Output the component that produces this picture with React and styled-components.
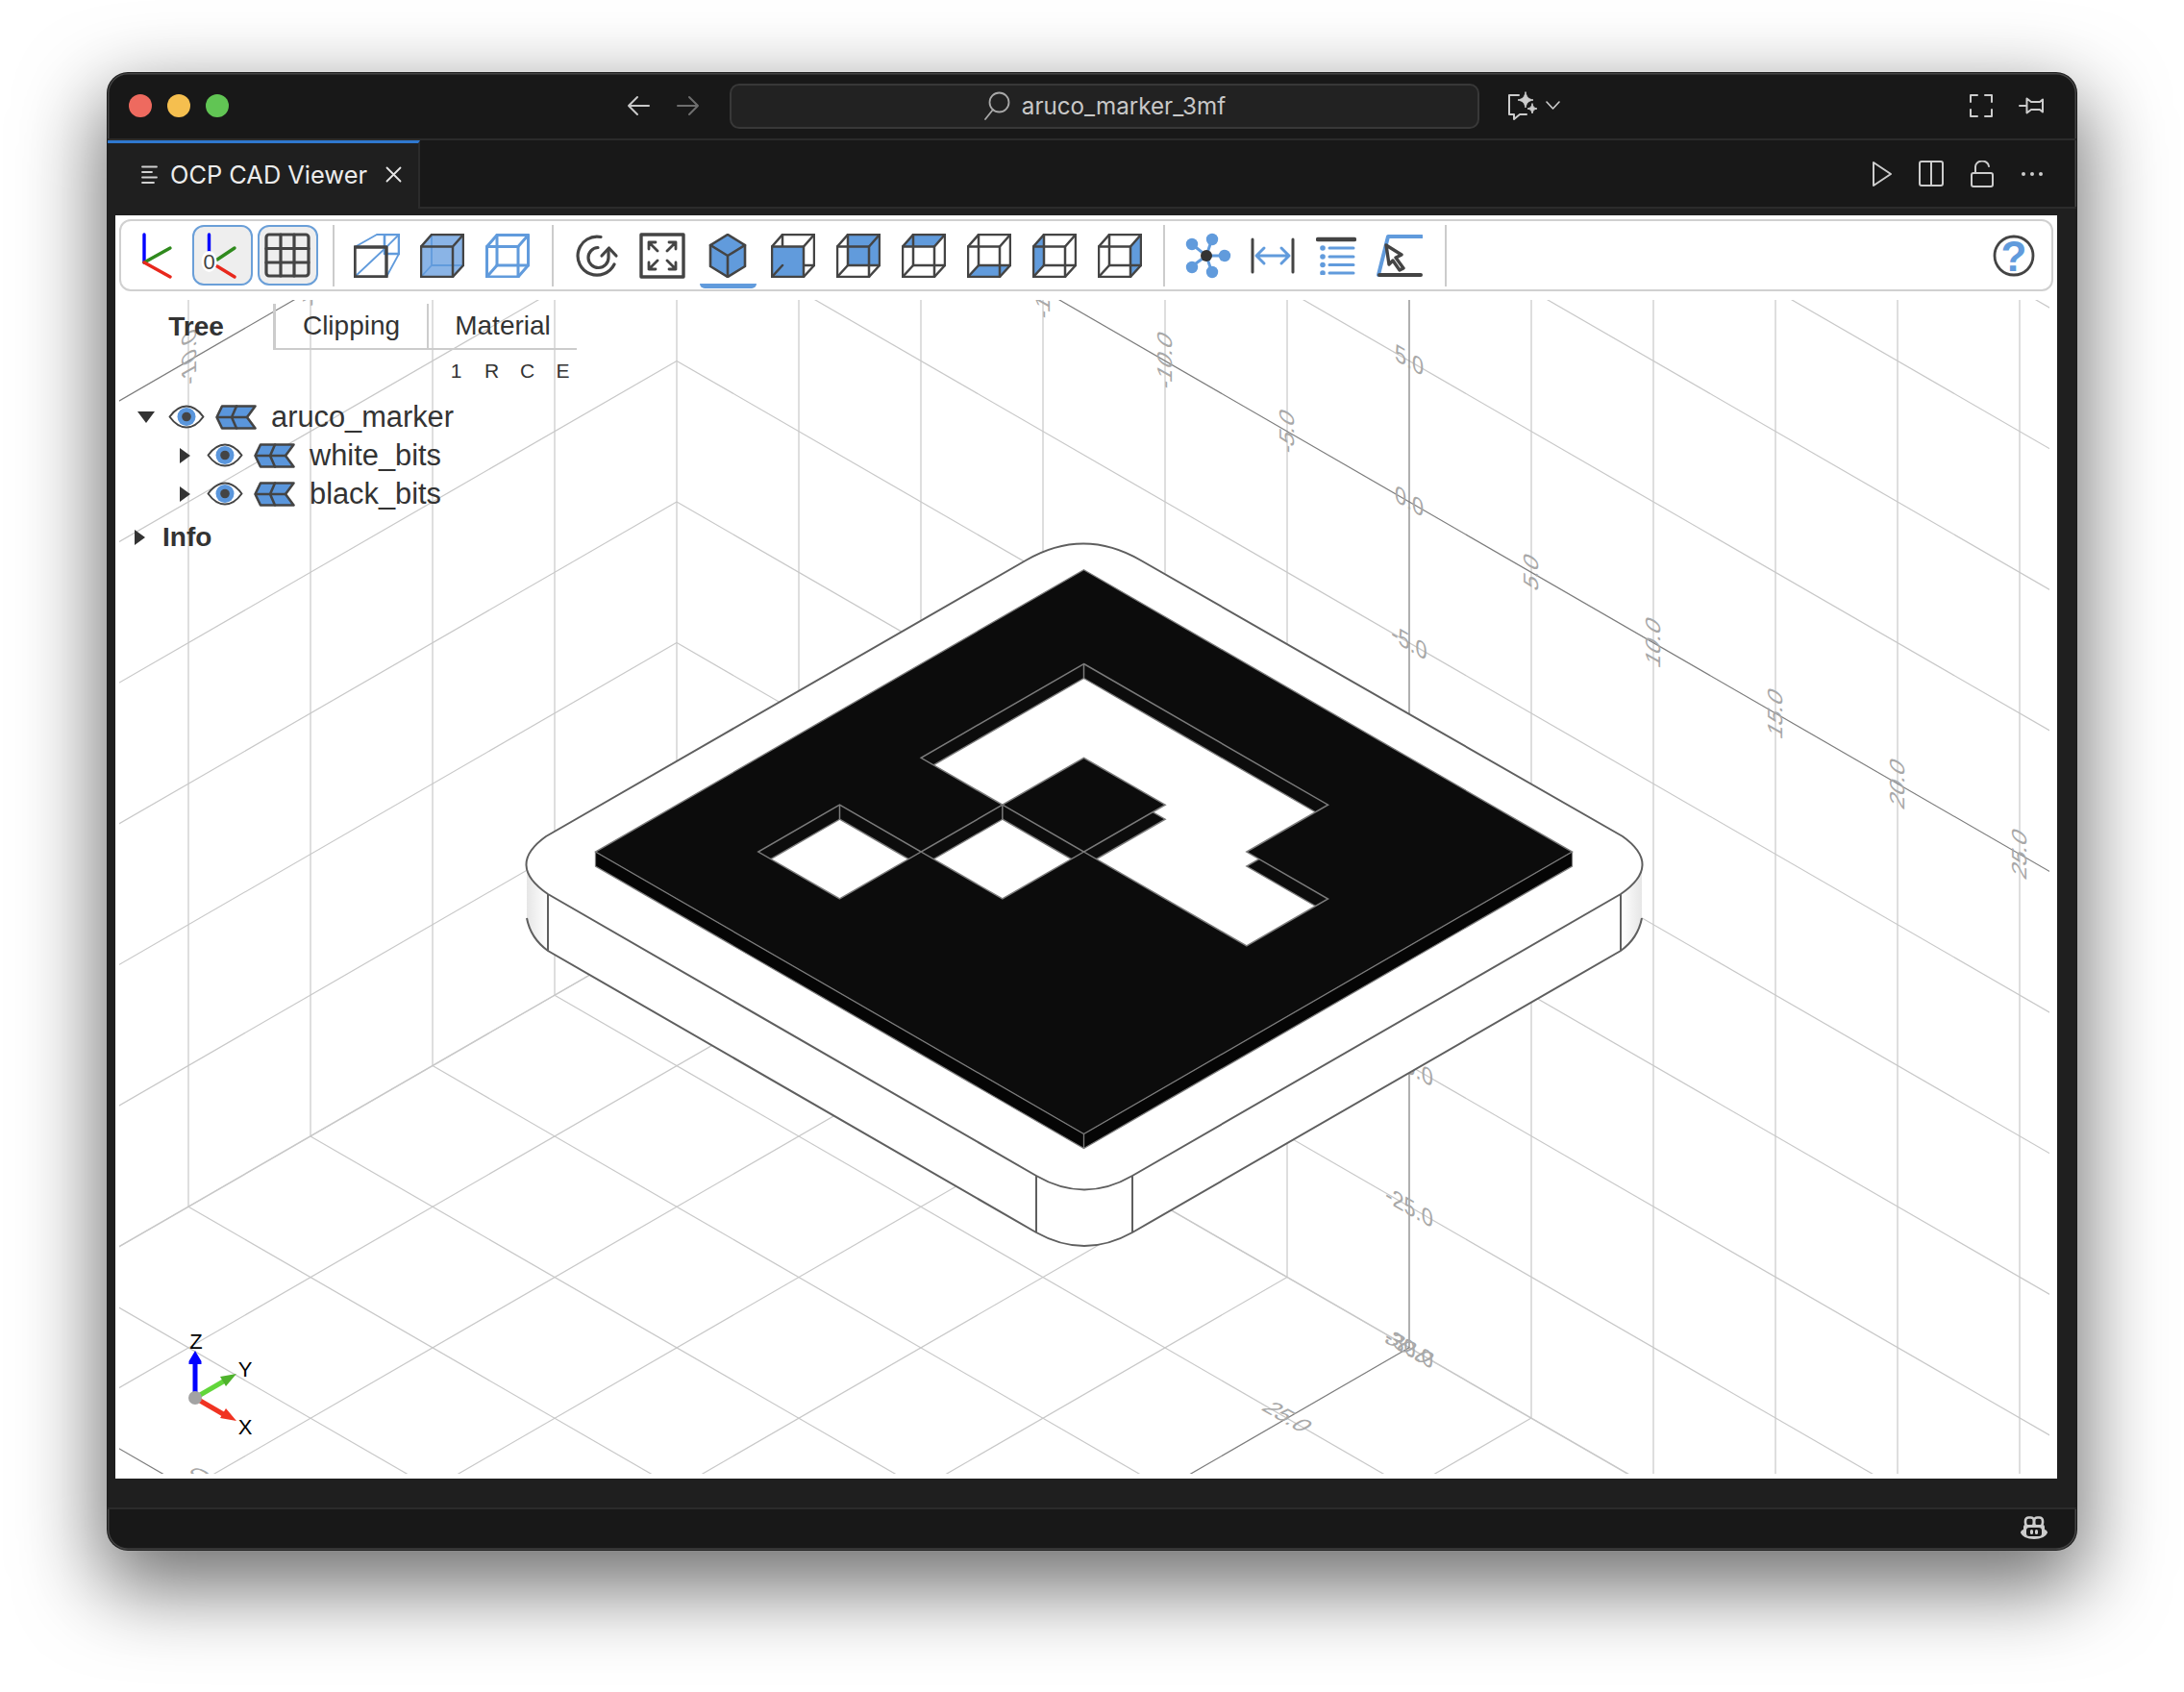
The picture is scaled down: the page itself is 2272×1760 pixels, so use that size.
import styled, { createGlobalStyle } from "styled-components";

const BLUE = "#619bdc";
const INK = "#444";

const GlobalStyle = createGlobalStyle`
  html, body { margin: 0; padding: 0; background: #fff; }
  body { width: 2272px; height: 1760px; overflow: hidden; font-family: "Liberation Sans", Arial, sans-serif; }
`;

const Stage = styled.div`
  width: 2272px;
  height: 1760px;
  padding: 76px 112px 148px;
  box-sizing: border-box;
`;
const Window = styled.div`
  width: 2048px;
  height: 1536px;
  border-radius: 21px;
  background: #181818;
  display: flex;
  flex-direction: column;
  overflow: hidden;
  box-shadow: 0 0 0 1px #1a1a1a, inset 0 0 0 1.5px #444, 0 32px 84px 8px rgba(0, 0, 0, 0.56);
`;
const TitleBar = styled.div`
  height: 70px;
  flex: none;
  display: flex;
  align-items: center;
  padding: 0 34px 0 22px;
  box-sizing: border-box;
  border-bottom: 2px solid #2b2b2b;
`;
const Light = styled.span`
  width: 24px;
  height: 24px;
  border-radius: 50%;
  margin-right: 16px;
  background: ${(p) => p.$color};
`;
const NavButtons = styled.div`
  display: flex;
  gap: 28px;
  margin-left: 398px;
  margin-right: 31px;
`;
const SearchBox = styled.div`
  width: 780px;
  height: 47px;
  box-sizing: border-box;
  background: #222;
  border: 2px solid #383838;
  border-radius: 10px;
  display: flex;
  align-items: center;
  justify-content: center;
  gap: 12px;
  color: #c8c8c8;
  font-family: Inter, sans-serif;
  font-size: 24.2px;
`;
const ChatButton = styled.div`
  display: flex;
  align-items: center;
  gap: 8px;
  margin-left: 29px;
`;
const RightIcons = styled.div`
  margin-left: auto;
  display: flex;
  align-items: center;
  gap: 27px;
`;
const TabBar = styled.div`
  height: 71px;
  flex: none;
  display: flex;
  align-items: stretch;
  box-sizing: border-box;
  border-bottom: 2px solid #2b2b2b;
`;
const EditorTab = styled.div`
  width: 325px;
  box-sizing: border-box;
  background: #1f1f1f;
  border-top: 3px solid #2f78cf;
  border-right: 2px solid #2b2b2b;
  margin-bottom: -2px;
  display: flex;
  align-items: center;
  padding: 0 0 3px 35px;
  color: #ececec;
  font-family: Inter, sans-serif;
  font-size: 25.4px;
`;
const TabTitle = styled.span`
  margin: 0 19px 0 13px;
  white-space: nowrap;
`;
const TabActions = styled.div`
  margin-left: auto;
  display: flex;
  align-items: center;
  gap: 28px;
  padding: 0 34px 0 0;
`;
const Frame = styled.div`
  flex: 1;
  background: #1f1f1f;
  padding: 7px 20px 30px 8px;
  display: flex;
  min-height: 0;
`;
const Web = styled.div`
  flex: 1;
  background: #fff;
  padding: 4px;
  display: flex;
  flex-direction: column;
  box-sizing: border-box;
`;
const Toolbar = styled.div`
  height: 75px;
  flex: none;
  box-sizing: border-box;
  border: 2px solid #d0d0d0;
  border-radius: 12px;
  display: flex;
  align-items: center;
  padding-left: 3px;
`;
const ToolButton = styled.div`
  position: relative;
  width: 63px;
  height: 63px;
  margin: 0 2.5px;
  box-sizing: border-box;
  display: flex;
  align-items: center;
  justify-content: center;
  border-radius: 12px;
  ${(p) => p.$active && `border: 2px solid #6a9fd8; background: #eee;`}
  ${(p) => p.$tight && `margin: 0 1.7px;`}
  ${(p) =>
    p.$underline &&
    `&::after {
      content: "";
      position: absolute;
      left: 2px;
      right: 2px;
      bottom: -3px;
      height: 5px;
      background: ${BLUE};
      border-radius: 0 0 8px 8px;
    }`}
`;
const ToolSep = styled.div`
  width: 2px;
  height: 64px;
  background: #ccc;
  margin: 0 ${(p) => p.$right}px 0 ${(p) => p.$left}px;
`;
const HelpButton = styled.div`
  margin-left: auto;
  padding-right: 17px;
  display: flex;
`;
const Viewport = styled.div`
  position: relative;
  margin-top: 9px;
  flex: 1;
  width: 2008px;
  overflow: hidden;
`;
const Scene = styled.svg`
  position: absolute;
  inset: 0;
  display: block;
`;
const TreePanel = styled.div`
  position: absolute;
  left: 0;
  top: 4px;
  width: 480px;
  color: #333;
`;
const TabRow = styled.div`
  width: 476px;
  height: 48px;
  display: flex;
  font-size: 28px;
`;
const PanelTab = styled.div`
  width: ${(p) => p.$width}px;
  box-sizing: border-box;
  display: flex;
  align-items: center;
  justify-content: center;
  font-weight: ${(p) => (p.$active ? 700 : 400)};
  ${(p) => !p.$active && `border-bottom: 2px solid #ccc;`}
  ${(p) => p.$leftEdge && `border-left: ${p.$leftEdge}px solid #ccc;`}
`;
const FlagRow = styled.div`
  height: 24px;
  margin-top: 10px;
  display: flex;
  justify-content: flex-end;
  font-size: 21px;
`;
const Flag = styled.span`
  width: 37px;
  text-align: center;
  line-height: 24px;
`;
const Tree = styled.div`
  margin-top: 15.500px;
`;
const TreeRow = styled.div`
  height: 40px;
  display: flex;
  align-items: center;
  padding-left: ${(p) => 19 + p.$depth * 40}px;
  font-size: 30.8px;
`;
const CaretBox = styled.span`
  width: 18px;
  margin-right: 14px;
  display: flex;
  justify-content: center;
`;
const CaretDown = styled.span`
  border-left: 9px solid transparent;
  border-right: 9px solid transparent;
  border-top: 12px solid #333;
`;
const CaretRight = styled.span`
  border-top: 8.5px solid transparent;
  border-bottom: 8.5px solid transparent;
  border-left: 11px solid #333;
`;
const NodeIcons = styled.span`
  display: flex;
  align-items: center;
  gap: 11px;
`;
const NodeName = styled.span`
  margin-left: 15px;
  white-space: nowrap;
`;
const InfoRow = styled.div`
  height: 40px;
  margin-top: 5px;
  display: flex;
  align-items: center;
  gap: 18px;
  padding-left: 16px;
  font-size: 28px;
  font-weight: 700;
`;
const Gutter = styled.div`
  height: 44px;
  flex: none;
  box-sizing: border-box;
  border-top: 2px solid #2b2b2b;
  display: flex;
  align-items: center;
  justify-content: flex-end;
  padding: 0 30px 4px 0;
`;

const Glyph = ({ w, h, children, stroke = "#ccc", sw = 2 }) => (
  <svg width={w} height={h} viewBox={`0 0 ${w} ${h}`} fill="none" stroke={stroke} strokeWidth={sw} strokeLinecap="round" strokeLinejoin="round">
    {children}
  </svg>
);

const CubeIcon = ({ face }) => {
  const faces = {
    front: "1,13.5 34,13.5 34,45 1,45",
    rear: "12,1 45,1 45,33 12,33",
    top: "1,13.5 12,1 45,1 34,13.5",
    bottom: "1,45 12,33 45,33 34,45",
    left: "1,13.5 12,1 12,33 1,45",
    right: "34,13.5 45,1 45,33 34,45",
  };
  return (
    <Glyph w={46} h={46} stroke={INK} sw={2.5}>
      {face !== "front" && <polygon points={faces[face]} fill={BLUE} stroke="none" />}
      <rect x="12" y="1" width="33" height="32" />
      {face === "front" && <polygon points={faces[face]} fill={BLUE} stroke="none" />}
      <rect x="1" y="13.5" width="33" height="31.5" />
      <path d="M1 13.5 12 1M34 13.5 45 1M34 45 45 33M1 45 12 33" />
    </Glyph>
  );
};

const ShadedCube = ({ mode }) => {
  if (mode === "wire")
    return (
      <Glyph w={48} h={46} stroke={BLUE} sw={1.8}>
        <rect x="32" y="1" width="15" height="20" strokeWidth="2.6" />
        <path d="M1 14 24 1M34 14 47 1M34 45 47 21M1 45 34 14M24 1H47" />
        <rect x="1" y="14" width="33" height="31" stroke={INK} strokeWidth="3.4" />
      </Glyph>
    );
  if (mode === "solid")
    return (
      <Glyph w={46} h={46} stroke={INK} sw={2.5}>
        <polygon points="1,13.5 12,1 45,1 45,33 34,45 1,45" fill="#8ab4e6" stroke="none" />
        <path d="M12 1V33H45M12 33 1 45" stroke={BLUE} strokeWidth="1.8" />
        <polygon points="1,13.5 12,1 45,1 45,33 34,45 1,45" />
        <path d="M1 13.5H34V45M34 13.5 45 1" />
      </Glyph>
    );
  return (
    <Glyph w={46} h={46} stroke={BLUE} sw={3}>
      <rect x="12" y="1.5" width="32.5" height="31.5" />
      <rect x="1.5" y="13.5" width="32.5" height="31.5" />
      <path d="M1.5 13.5 12 1.5M34 13.5 44.5 1.5M34 45 44.5 33M1.5 45 12 33" />
    </Glyph>
  );
};

const AxesIcon = () => (
  <Glyph w={34} h={48} sw={3.4}>
    <path d="M4 2V31" stroke="#0000ff" />
    <path d="M4 31 31 16" stroke="#2f8a1d" />
    <path d="M4 31 31 46" stroke="#e8281c" />
  </Glyph>
);
const Axes0Icon = () => (
  <Glyph w={48} h={48} sw={3.4}>
    <path d="M10.5 2V21" stroke="#0000ff" />
    <path d="M19 28 37 16" stroke="#2f8a1d" />
    <path d="M19 35 37 46" stroke="#e8281c" />
    <ellipse cx="10.5" cy="30" rx="8" ry="11" fill="#fff" stroke="none" />
    <text x="10.5" y="38" textAnchor="middle" fontFamily="Liberation Sans" fontSize="22" fill={INK} stroke="none">0</text>
  </Glyph>
);
const GridIcon = () => (
  <Glyph w={48} h={47} stroke={INK} sw={3.2}>
    <rect x="2" y="2" width="44" height="43" rx="3" />
    <path d="M17 2V45M31 2V45M2 16.5H46M2 31H46" />
  </Glyph>
);
const ResetIcon = () => (
  <Glyph w={48} h={46} stroke={INK} sw={3.2}>
    <path d="M28 3.5A20 20 0 1 0 42 32" />
    <path d="M25 14.500A10.500 10.500 0 1 0 36 25V16" />
    <path d="M29 23 36.500 15 44 23" />
  </Glyph>
);
const FitIcon = () => (
  <Glyph w={48} h={48} stroke={INK} sw={2.8}>
    <rect x="2" y="2" width="44" height="44" strokeWidth="3.4" />
    <path d="M10 17V10H17M10 10 19 19M31 10H38V17M38 10 29 19M10 31V38H17M10 38 19 29M31 38H38V31M38 38 29 29" />
  </Glyph>
);
const IsoIcon = () => (
  <Glyph w={40} h={46} stroke={INK} sw={2.6}>
    <polygon points="20,1 38,12 38,34 20,45 2,34 2,12" fill={BLUE} />
    <path d="M2 12 20 23 38 12M20 23V45" />
  </Glyph>
);
const ExplodeIcon = () => (
  <Glyph w={48} h={48} stroke={BLUE} sw={3}>
    <path d="M22 24 28 6M22 24H41M22 24 28 42M22 24 7 35M22 24 7 12" />
    <g fill={BLUE} stroke="none">
      <circle cx="28" cy="7" r="6.2" />
      <circle cx="41" cy="24" r="6.2" />
      <circle cx="28" cy="41" r="6.2" />
      <circle cx="7" cy="36" r="6.2" />
      <circle cx="7" cy="12" r="6.2" />
    </g>
    <circle cx="22" cy="24" r="6" fill="#333" stroke="none" />
  </Glyph>
);
const DistanceIcon = () => (
  <Glyph w={46} h={38} stroke={INK} sw={3}>
    <path d="M2 2V36M44 2V36" />
    <path d="M7 19H39M14 11 6 19 14 27M32 11 40 19 32 27" stroke={BLUE} />
  </Glyph>
);
const PropsIcon = () => (
  <Glyph w={42} h={40} stroke={BLUE} sw={3}>
    <path d="M2 3H40" stroke={INK} strokeWidth="4.4" />
    <path d="M14 12H39M14 21H39M14 29.5H39M14 38H39" />
    <g fill={BLUE} stroke="none">
      <circle cx="7" cy="12" r="2.8" />
      <circle cx="7" cy="21" r="2.8" />
      <circle cx="7" cy="29.5" r="2.8" />
      <circle cx="7" cy="38" r="2.8" />
    </g>
  </Glyph>
);
const AngleIcon = () => (
  <Glyph w={48} h={44} stroke={BLUE} sw={4}>
    <path d="M47 2H12L2 42" />
    <path d="M3 42H46" stroke={INK} />
    <path d="M10 11 26 21 20 24 28 35 24 37 17 27 13 31Z" fill="#fff" stroke={INK} strokeWidth="3.4" />
  </Glyph>
);
const HelpIcon = () => (
  <Glyph w={44} h={44} stroke={INK} sw={2.8}>
    <circle cx="22" cy="22" r="20" fill="#fff" />
    <text x="22" y="38" textAnchor="middle" fontFamily="Liberation Sans" fontWeight="700" fontSize="44" fill={BLUE} stroke="none">?</text>
  </Glyph>
);

const EyeIcon = () => (
  <Glyph w={38} h={25} stroke={INK} sw={2}>
    <path d="M1.5 12.500C8 3.500 14 1.500 19 1.500S30 3.500 36.500 12.500C30 21.500 24 23.500 19 23.500S8 21.500 1.500 12.500Z" fill="#fff" />
    <circle cx="19" cy="12.500" r="9.500" fill="#5a96dc" stroke="none" />
    <circle cx="19" cy="12.500" r="4.800" fill={INK} stroke="none" />
  </Glyph>
);
const ShapeIcon = () => (
  <Glyph w={43} h={26} stroke={INK} sw={2.6}>
    <path d="M7 1.500H41.500L33 13 41.500 24.500H7L1.500 13Z" fill="#5a96dc" />
    <path d="M22 1.500 17 13 22 24.500M3 13H33" />
  </Glyph>
);

// scene geometry, all numbers are page coordinates
const CX = 127;
const CY = 73.3;
const SLOPE = CY / CX;

function buildGrid() {
  const light = [];
  const dark = [];
  const add = (list, x1, y1, x2, y2) => list.push([x1, y1, x2, y2]);
  // right wall
  for (let m = -6; m <= 6; m++) {
    const y = (x) => 522 + SLOPE * (x - 1466) + 2 * CY * m;
    add(m === 0 ? dark : light, 704, y(704), 2228, y(2228));
  }
  for (let k = 0; k <= 12; k++) {
    const x = 704 + CX * k;
    const mid = 522 + SLOPE * (x - 1466);
    add(k === 6 ? dark : light, x, mid - 880, x, mid + 880);
  }
  // left wall
  for (let m = -6; m <= 6; m++) {
    const y = (x) => 522 - SLOPE * (x + 58) + 2 * CY * m;
    add(m === 0 ? dark : light, -820, y(-820), 704, y(704));
  }
  for (let k = 1; k <= 12; k++) {
    const x = 704 - CX * k;
    const mid = 522 - SLOPE * (x + 58);
    add(light, x, mid - 880, x, mid + 880);
  }
  // floor
  for (let k = 0; k <= 12; k++) {
    const list = k === 6 ? dark : light;
    add(list, 704 - CX * k, 962 + CY * k, 704 - CX * k + 1524, 962 + CY * k + 880);
    add(list, 704 + CX * k, 962 + CY * k, 704 + CX * k - 1524, 962 + CY * k + 880);
  }
  return { light, dark };
}

const { light: lightLines, dark: darkLines } = buildGrid();

const zLabels = ["5.0", "0.0", "-5.0", "-10.0", "-15.0", "-20.0", "-25.0", "-30.0"].map((t, i) => ({
  t,
  x: 1466,
  y: 375 + 146.8 * i,
  m: [0.866, 0.5, 0, 1],
}));
const yLabels = [
  ["-15.0", 1085, 302],
  ["-10.0", 1212, 375],
  ["-5.0", 1339, 449],
  ["5.0", 1593, 595],
  ["10.0", 1720, 668],
  ["15.0", 1847, 742],
  ["20.0", 1974, 815],
  ["25.0", 2101, 888],
].map(([t, x, y]) => ({ t, x, y, m: [0, -1, 0.866, 0.5] }));
const wallLabels = [
  ["-10.0", 197, 372],
  ["-5.0", 323, 298],
].map(([t, x, y]) => ({ t, x, y, m: [0, -1, 0.866, -0.5] }));
const floorLabels = [
  ["30.0", 1466, 1403],
  ["25.0", 1339, 1474],
  ["20.0", 1212, 1548],
].map(([t, x, y]) => ({ t, x, y, m: [0.866, 0.5, -0.866, 0.5] }));
const floorLabels2 = [["-20.0", 190, 1544]].map(([t, x, y]) => ({ t, x, y, m: [0.866, -0.5, 0.866, 0.5] }));
const gridLabels = [...zLabels, ...yLabels, ...wallLabels, ...floorLabels, ...floorLabels2];

const UX = 84.67;
const UY = 48.9;
const pt = (i, j, dz = 0) => [1127.5 + (i - j) * UX, 592.7 + (i + j) * UY + dz];
const poly = (cells, dz = 0) => cells.map(([i, j]) => pt(i, j, dz).join(",")).join(" ");

const HOLES = [
  [[1, 1], [4, 1], [4, 2], [5, 2], [5, 3], [3, 3], [3, 2], [2, 2], [2, 3], [1, 3]],
  [[2, 3], [3, 3], [3, 4], [2, 4]],
  [[1, 4], [2, 4], [2, 5], [1, 5]],
];
const HOLE_DEPTH = 15;
const PLATE_EDGE = "#5f5f5f";
const INNER_EDGE = "#7b7b7b";

const PLATE_TOP =
  "M568 870L1067 583Q1127 548 1187 583L1688 870Q1730 900 1686 930L1178 1223Q1128 1252 1078 1223L570 930Q526 900 568 870Z";

const MarkerPlate = () => (
  <g>
    <defs>
      <linearGradient id="cornerL" x1="0" x2="1" y1="0" y2="0">
        <stop offset="0" stopColor="#e6e6e6" />
        <stop offset="1" stopColor="#fff" />
      </linearGradient>
      <linearGradient id="cornerR" x1="1" x2="0" y1="0" y2="0">
        <stop offset="0" stopColor="#e6e6e6" />
        <stop offset="1" stopColor="#fff" />
      </linearGradient>
      {HOLES.map((h, i) => (
        <clipPath id={`hole${i}`} key={i}>
          <polygon points={poly(h)} />
        </clipPath>
      ))}
    </defs>
    {/* side walls of the white base */}
    <path d="M548 900V955Q552 976 570 989L1078 1282Q1128 1310 1178 1282L1686 989Q1704 976 1708 955V900Z" fill="#fff" />
    <path d="M548 900V955Q552 976 570 989V930Z" fill="url(#cornerL)" />
    <path d="M1708 900V955Q1704 976 1686 989V930Z" fill="url(#cornerR)" />
    <g fill="none" stroke={PLATE_EDGE} strokeWidth="2">
      <path d="M548 955Q552 976 570 989L1078 1282Q1128 1310 1178 1282L1686 989Q1704 976 1708 955" />
      <path d="M570 930V989M1078 1223V1282M1178 1223V1282M1686 930V989" />
    </g>
    <path d={PLATE_TOP} fill="#fff" stroke={PLATE_EDGE} strokeWidth="2" />
    {/* black bits */}
    <polygon points={`${poly([[0, 6], [6, 6], [6, 0]])} ${poly([[6, 0], [6, 6], [0, 6]], 15)}`} fill="#050505" />
    <polygon points={poly([[0, 0], [6, 0], [6, 6], [0, 6]])} fill="#0c0c0c" stroke={INNER_EDGE} strokeWidth="1.3" />
    <polyline points={`${poly([[0, 6]])} ${poly([[0, 6]], 15)} ${poly([[6, 6]], 15)} ${poly([[6, 0]], 15)} ${poly([[6, 0]])}`} fill="none" stroke={INNER_EDGE} strokeWidth="1.2" />
    <path d={`M${pt(6, 6).join(" ")}V${pt(6, 6, 15)[1]}`} stroke={INNER_EDGE} strokeWidth="1.3" />
    {HOLES.map((h, i) => (
      <g key={i}>
        <g clipPath={`url(#hole${i})`}>
          <polygon points={poly(h, HOLE_DEPTH)} fill="#fff" stroke={INNER_EDGE} strokeWidth="1.4" />
        </g>
        <polygon points={poly(h)} fill="none" stroke={INNER_EDGE} strokeWidth="1.5" />
      </g>
    ))}
    {[[1, 1], [2, 3], [1, 4]].map(([i, j]) => (
      <path key={`${i}${j}`} d={`M${pt(i, j).join(" ")}V${pt(i, j, HOLE_DEPTH)[1]}`} stroke={INNER_EDGE} strokeWidth="1.5" />
    ))}
  </g>
);

const Triad = () => (
  <g>
    <path d="M203 1454V1416" stroke="#0000ff" strokeWidth="5" />
    <path d="M203 1405 209.500 1416V1419H196.500V1416Z" fill="#0000ff" />
    <path d="M203 1454 234 1436" stroke="#62d63a" strokeWidth="5" />
    <path d="M246 1429 229 1432 235 1442Z" fill="#4fb32c" />
    <path d="M203 1454 234 1472" stroke="#f03322" strokeWidth="5" />
    <path d="M246 1478 235 1465 229 1475Z" fill="#f03322" />
    <circle cx="203" cy="1454" r="7" fill="#a3a3a3" />
    <g fontFamily="Liberation Sans" fontSize="22" fill="#000" textAnchor="middle">
      <text x="204" y="1403">Z</text>
      <text x="255" y="1432">Y</text>
      <text x="255" y="1492">X</text>
    </g>
  </g>
);

const CadScene = () => (
  <Scene width="2008" height="1221" viewBox="124 312 2008 1221">
    <g stroke="#c8c8c8" strokeWidth="1.2">
      {lightLines.map((l, i) => (
        <line key={i} x1={l[0]} y1={l[1]} x2={l[2]} y2={l[3]} />
      ))}
    </g>
    <g stroke="#7c7c7c" strokeWidth="1.2">
      {darkLines.map((l, i) => (
        <line key={i} x1={l[0]} y1={l[1]} x2={l[2]} y2={l[3]} />
      ))}
    </g>
    <g fontFamily="Liberation Sans" fontSize="25" fill="#a8a8a8" textAnchor="middle">
      {gridLabels.map((l, i) => (
        <text key={i} y="8" transform={`matrix(${l.m.join(" ")} ${l.x} ${l.y})`}>
          {l.t}
        </text>
      ))}
    </g>
    <MarkerPlate />
    <Triad />
  </Scene>
);

const TreeNode = ({ depth, open, name }) => (
  <TreeRow $depth={depth}>
    <CaretBox>{open ? <CaretDown /> : <CaretRight />}</CaretBox>
    <NodeIcons>
      <EyeIcon />
      <ShapeIcon />
    </NodeIcons>
    <NodeName>{name}</NodeName>
  </TreeRow>
);

export default function App() {
  return (
    <>
      <GlobalStyle />
      <Stage>
        <Window>
          <TitleBar>
            <Light $color="#ee6a5f" />
            <Light $color="#f5bf4f" />
            <Light $color="#61c554" />
            <NavButtons>
              <Glyph w={24} h={24} stroke="#c8c8c8">
                <path d="M23 12H2M11 3 2 12 11 21" />
              </Glyph>
              <Glyph w={24} h={24} stroke="#6e6e6e">
                <path d="M1 12H22M13 3 22 12 13 21" />
              </Glyph>
            </NavButtons>
            <SearchBox>
              <Glyph w={28} h={30} stroke="#a8a8a8" sw={1.8}>
                <circle cx="16.5" cy="11.5" r="10" />
                <path d="M10 19 2 29" />
              </Glyph>
              <span>aruco_marker_3mf</span>
            </SearchBox>
            <ChatButton>
              <Glyph w={32} h={30}>
                <path d="M12 4H2V24H7V29L13 24H20" />
                <path d="M19 1C20 6 22 8 27 9 22 10 20 12 19 17 18 12 16 10 11 9 16 8 18 6 19 1Z" fill="#ccc" strokeWidth="1" />
                <path d="M26 13C26.500 16 28 17.500 31 18 28 18.500 26.500 20 26 23 25.500 20 24 18.500 21 18 24 17.500 25.500 16 26 13Z" fill="#ccc" strokeWidth="1" />
              </Glyph>
              <Glyph w={15} h={10} sw={1.6}>
                <path d="M1 1 7.500 8 14 1" />
              </Glyph>
            </ChatButton>
            <RightIcons>
              <Glyph w={24} h={24}>
                <path d="M8 1H1V8M16 1H23V8M1 16V23H8M23 16V23H16" />
              </Glyph>
              <Glyph w={26} h={18}>
                <path d="M1 9H8.500M8.500 1.500 13 5H22L25 2.500V15.500L22 13H13L8.500 16.500Z" />
              </Glyph>
            </RightIcons>
          </TitleBar>
          <TabBar>
            <EditorTab>
              <Glyph w={17} h={19} stroke="#d0d0d0" sw={1.8}>
                <path d="M1 1.500H16M1 7H11M1 12.500H16M1 18H13" />
              </Glyph>
              <TabTitle>OCP CAD Viewer</TabTitle>
              <Glyph w={17} h={17} stroke="#e6e6e6" sw={1.8}>
                <path d="M1.500 1.500 15.500 15.500M15.500 1.500 1.500 15.500" />
              </Glyph>
            </EditorTab>
            <TabActions>
              <Glyph w={20} h={26}>
                <path d="M1 1V25L19 13Z" />
              </Glyph>
              <Glyph w={26} h={27}>
                <rect x="1" y="1" width="24" height="25" rx="2" />
                <path d="M13 1V26" />
              </Glyph>
              <Glyph w={24} h={28}>
                <rect x="1" y="13" width="22" height="14" rx="2" />
                <path d="M5 13V7A7 6 0 0 1 19 6" />
              </Glyph>
              <Glyph w={24} h={6} stroke="none">
                <circle cx="3" cy="3" r="2" fill="#ccc" />
                <circle cx="12" cy="3" r="2" fill="#ccc" />
                <circle cx="21" cy="3" r="2" fill="#ccc" />
              </Glyph>
            </TabActions>
          </TabBar>
          <Frame>
            <Web>
              <Toolbar>
                <ToolButton><AxesIcon /></ToolButton>
                <ToolButton $active><Axes0Icon /></ToolButton>
                <ToolButton $active><GridIcon /></ToolButton>
                <ToolSep $left={13} $right={10} />
                <ToolButton><ShadedCube mode="wire" /></ToolButton>
                <ToolButton><ShadedCube mode="solid" /></ToolButton>
                <ToolButton><ShadedCube mode="blue" /></ToolButton>
                <ToolSep $left={12} $right={11} />
                <ToolButton><ResetIcon /></ToolButton>
                <ToolButton><FitIcon /></ToolButton>
                <ToolButton $underline><IsoIcon /></ToolButton>
                <ToolButton><CubeIcon face="front" /></ToolButton>
                <ToolButton><CubeIcon face="rear" /></ToolButton>
                <ToolButton><CubeIcon face="top" /></ToolButton>
                <ToolButton><CubeIcon face="bottom" /></ToolButton>
                <ToolButton><CubeIcon face="left" /></ToolButton>
                <ToolButton><CubeIcon face="right" /></ToolButton>
                <ToolSep $left={11} $right={12} />
                <ToolButton $tight><ExplodeIcon /></ToolButton>
                <ToolButton $tight><DistanceIcon /></ToolButton>
                <ToolButton $tight><PropsIcon /></ToolButton>
                <ToolButton $tight><AngleIcon /></ToolButton>
                <ToolSep $left={13} $right={0} />
                <HelpButton><HelpIcon /></HelpButton>
              </Toolbar>
              <Viewport>
                <CadScene />
                <TreePanel>
                  <TabRow>
                    <PanelTab $width={160} $active>Tree</PanelTab>
                    <PanelTab $width={160} $leftEdge={3}>Clipping</PanelTab>
                    <PanelTab $width={156} $leftEdge={2}>Material</PanelTab>
                  </TabRow>
                  <FlagRow>
                    <Flag>1</Flag>
                    <Flag>R</Flag>
                    <Flag>C</Flag>
                    <Flag>E</Flag>
                  </FlagRow>
                  <Tree>
                    <TreeNode depth={0} open name="aruco_marker" />
                    <TreeNode depth={1} name="white_bits" />
                    <TreeNode depth={1} name="black_bits" />
                  </Tree>
                  <InfoRow>
                    <CaretRight />
                    <span>Info</span>
                  </InfoRow>
                </TreePanel>
              </Viewport>
            </Web>
          </Frame>
          <Gutter>
            <Glyph w={28} h={24} stroke="#ccc" sw={2.6}>
              <rect x="5" y="1.500" width="9" height="9" rx="3.500" />
              <rect x="14" y="1.500" width="9" height="9" rx="3.500" />
              <path d="M5 9H23Q25 9 25 11V14Q28 15 28 17.500Q25 24 14 24Q3 24 0 17.500Q0 15 3 14V11Q3 9 5 9Z" fill="#ccc" stroke="none" />
              <rect x="6" y="12" width="16" height="9" rx="3" fill="#181818" stroke="none" />
              <rect x="10" y="14" width="3" height="5" rx="1.500" fill="#ccc" stroke="none" />
              <rect x="15" y="14" width="3" height="5" rx="1.500" fill="#ccc" stroke="none" />
            </Glyph>
          </Gutter>
        </Window>
      </Stage>
    </>
  );
}
